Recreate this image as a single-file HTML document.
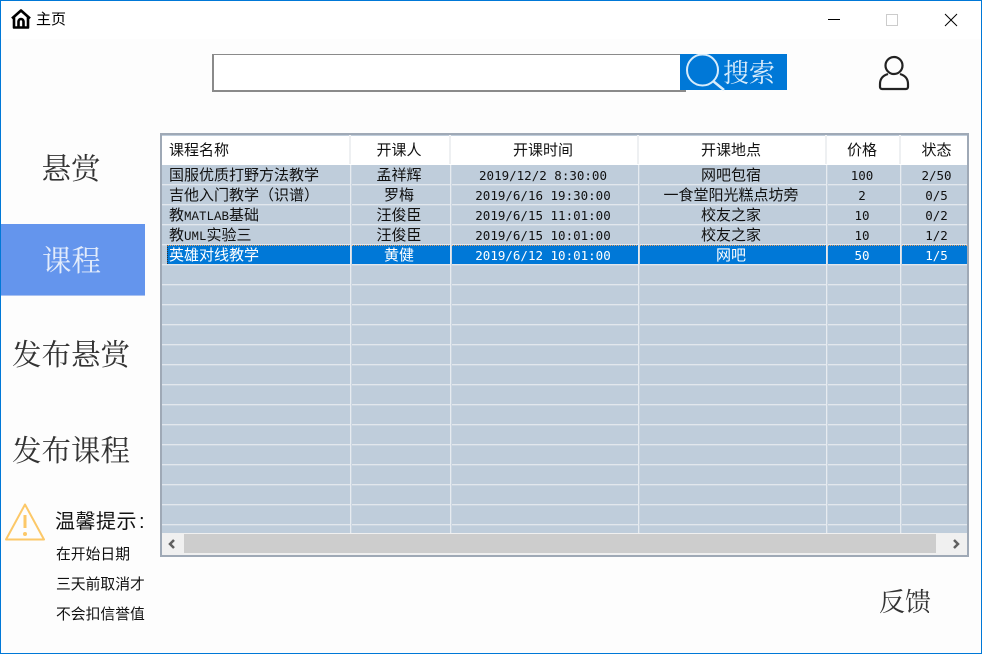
<!DOCTYPE html>
<html lang="zh"><head><meta charset="utf-8"><title>主页</title>
<style>
html,body{margin:0;padding:0}
body{width:982px;height:654px;overflow:hidden;background:#fff;position:relative;font-family:"Liberation Sans","Noto Sans CJK SC",sans-serif;color:#1a1a1a}
div,span{position:absolute;box-sizing:border-box}
.frame{left:0;top:0;width:982px;height:654px;border:1px solid #0078d7;pointer-events:none}
.bg{left:1px;top:39px;width:980px;height:614px;background:#fdfdfd}
.nav{font-family:"Liberation Serif","Noto Serif CJK SC",serif;font-size:29.5px;line-height:40px;white-space:nowrap;color:#333;text-align:center}
.tip{left:56px;font-size:14.8px;line-height:20px;white-space:nowrap;color:#111}
.table{left:160px;top:133px;width:809px;height:424px;border:2px solid #9fa9b6;background:#bfcddb;overflow:hidden}
.hl{left:0;width:805px;height:2px;background:linear-gradient(#e2e7ed 50%,#cbd6e1 50%)}
.vl{top:30px;width:2px;height:368px;background:linear-gradient(90deg,#e6ebf0 50%,#cbd6e1 50%)}
.head{left:0;top:1px;width:805px;height:29px;background:#fff}
.hv{top:0;width:2px;height:29px;background:#eef0f2}
.c{font-size:15px;line-height:20px;height:20px;white-space:nowrap;text-align:center;color:#111}
.n{font-family:"DejaVu Sans Mono","Liberation Mono",monospace;font-size:12.5px}
.m{position:static;font-family:"Liberation Mono",monospace;font-size:12.5px}
.l{text-align:left}
.sel{color:#fff}
</style></head><body>
<div class="bg"></div>

<svg style="position:absolute;left:11px;top:9px" width="20" height="20" viewBox="0 0 20 20"><path d="M1 9.500 10 1.500l9 8M3 8v10.500h14V8M7.500 18v-5.500a2.500 2.500 0 0 1 5 0V18" fill="none" stroke="#000" stroke-width="2.600" stroke-linejoin="round"/></svg>
<div style="left:36px;top:10px;font-size:15px;line-height:20px;color:#000;white-space:nowrap">主页</div>

<div style="left:828px;top:19px;width:12px;height:1px;background:#000"></div>
<div style="left:886px;top:14px;width:12px;height:12px;border:1px solid #ccc"></div>
<svg style="position:absolute;left:944px;top:13px" width="14" height="14" viewBox="0 0 14 14"><path d="M1 1 13 13M13 1 1 13" stroke="#000" stroke-width="1" fill="none"/></svg>

<div style="left:212px;top:54px;width:474px;height:38px;background:#fff;border:1px solid #8a8a8a;border-left-width:2px;border-bottom-width:2px"></div>
<div style="left:680px;top:54px;width:107px;height:36px;background:#0078d7"></div>
<svg style="position:absolute;left:680px;top:54px" width="50" height="38" viewBox="0 0 50 38"><circle cx="22.500" cy="16" r="15.500" fill="none" stroke="#d8ecfb" stroke-width="2"/><path d="M33 27 44 36" stroke="#d8ecfb" stroke-width="2.500"/></svg>
<div style="left:723px;top:56px;font-family:'Liberation Serif','Noto Serif CJK SC',serif;font-size:26px;line-height:36px;color:#d8ecfb;white-space:nowrap">搜索</div>

<svg style="position:absolute;left:877px;top:54px" width="34" height="38" viewBox="0 0 34 38"><circle cx="17" cy="11.500" r="8.500" fill="none" stroke="#222" stroke-width="2.200"/><path d="M11 20C6 21.500 3 25 3 30v3a2 2 0 0 0 2 2h24a2 2 0 0 0 2-2V30c0-5-3-8.500-8-10" fill="none" stroke="#222" stroke-width="2.200"/></svg>

<div class="nav" style="left:1px;top:150px;width:140px">悬赏</div>
<div style="left:1px;top:224px;width:144px;height:72px;background:#6495ed;border-bottom:1px solid #a9c1f0"></div>
<div class="nav" style="left:1px;top:242px;width:141px;color:#e3ecfb">课程</div>
<div class="nav" style="left:12px;top:336px">发布悬赏</div>
<div class="nav" style="left:12px;top:432px">发布课程</div>

<svg style="position:absolute;left:4px;top:502px" width="42" height="40" viewBox="0 0 42 40"><path d="M21 2.500 40 37.500H2Z" fill="none" stroke="#fcc868" stroke-width="2" stroke-linejoin="round"/><path d="M21 13v13" stroke="#fcc868" stroke-width="3"/><circle cx="21" cy="32" r="2" fill="#fcc868"/></svg>
<div class="tip" style="left:55px;top:510px;font-size:20px;line-height:24px;letter-spacing:.5px">温馨提示<span style="position:static;margin-left:2px">:</span></div>
<div class="tip" style="top:545px">在开始日期</div>
<div class="tip" style="top:575px">三天前取消才</div>
<div class="tip" style="top:605px">不会扣信誉值</div>

<div class="nav" style="left:879px;top:583px;font-size:26px">反馈</div>

<div class="table">
  <div class="head"></div>
  <div class="hv" style="left:187px"></div><div class="hv" style="left:287px"></div><div class="hv" style="left:475px"></div><div class="hv" style="left:663px"></div><div class="hv" style="left:737px"></div>

  <div class="hl" style="top:49px"></div><div class="hl" style="top:69px"></div><div class="hl" style="top:89px"></div>
  <div class="hl" style="top:109px"></div><div class="hl" style="top:129px"></div><div class="hl" style="top:149px"></div>
  <div class="hl" style="top:169px"></div><div class="hl" style="top:189px"></div><div class="hl" style="top:209px"></div>
  <div class="hl" style="top:229px"></div><div class="hl" style="top:249px"></div><div class="hl" style="top:269px"></div>
  <div class="hl" style="top:289px"></div><div class="hl" style="top:309px"></div><div class="hl" style="top:329px"></div>
  <div class="hl" style="top:349px"></div><div class="hl" style="top:369px"></div><div class="hl" style="top:389px"></div>

  <div style="left:5px;top:110px;width:800px;height:19px;background:#0078d7;border-top:1px dotted #e8a060;border-left:1px dotted #333"></div>

  <div class="vl" style="left:188px"></div><div class="vl" style="left:288px"></div><div class="vl" style="left:476px"></div><div class="vl" style="left:664px"></div><div class="vl" style="left:738px"></div>

  <div class="c l" style="left:7px;top:6px">课程名称</div>
  <div class="c" style="left:187px;width:100px;top:6px">开课人</div>
  <div class="c" style="left:287px;width:188px;top:6px">开课时间</div>
  <div class="c" style="left:475px;width:188px;top:6px">开课地点</div>
  <div class="c" style="left:663px;width:74px;top:6px">价格</div>
  <div class="c" style="left:737px;width:75px;top:6px">状态</div>

  <div class="c l" style="left:7px;top:31px">国服优质打野方法教学</div>
  <div class="c" style="left:187px;width:100px;top:31px">孟祥辉</div>
  <div class="c n" style="left:287px;width:188px;top:31px">2019/12/2 8:30:00</div>
  <div class="c" style="left:475px;width:188px;top:31px">网吧包宿</div>
  <div class="c n" style="left:663px;width:74px;top:31px">100</div>
  <div class="c n" style="left:737px;width:75px;top:31px">2/50</div>

  <div class="c l" style="left:7px;top:51px">吉他入门教学（识谱）</div>
  <div class="c" style="left:187px;width:100px;top:51px">罗梅</div>
  <div class="c n" style="left:287px;width:188px;top:51px">2019/6/16 19:30:00</div>
  <div class="c" style="left:475px;width:188px;top:51px">一食堂阳光糕点坊旁</div>
  <div class="c n" style="left:663px;width:74px;top:51px">2</div>
  <div class="c n" style="left:737px;width:75px;top:51px">0/5</div>

  <div class="c l" style="left:7px;top:71px">教<span class="m">MATLAB</span>基础</div>
  <div class="c" style="left:187px;width:100px;top:71px">汪俊臣</div>
  <div class="c n" style="left:287px;width:188px;top:71px">2019/6/15 11:01:00</div>
  <div class="c" style="left:475px;width:188px;top:71px">校友之家</div>
  <div class="c n" style="left:663px;width:74px;top:71px">10</div>
  <div class="c n" style="left:737px;width:75px;top:71px">0/2</div>

  <div class="c l" style="left:7px;top:91px">教<span class="m">UML</span>实验三</div>
  <div class="c" style="left:187px;width:100px;top:91px">汪俊臣</div>
  <div class="c n" style="left:287px;width:188px;top:91px">2019/6/15 10:01:00</div>
  <div class="c" style="left:475px;width:188px;top:91px">校友之家</div>
  <div class="c n" style="left:663px;width:74px;top:91px">10</div>
  <div class="c n" style="left:737px;width:75px;top:91px">1/2</div>

  <div class="c l sel" style="left:7px;top:111px">英雄对线教学</div>
  <div class="c sel" style="left:187px;width:100px;top:111px">黄健</div>
  <div class="c n sel" style="left:287px;width:188px;top:111px">2019/6/12 10:01:00</div>
  <div class="c sel" style="left:475px;width:188px;top:111px">网吧</div>
  <div class="c n sel" style="left:663px;width:74px;top:111px">50</div>
  <div class="c n sel" style="left:737px;width:75px;top:111px">1/5</div>

  <div style="left:0;top:398px;width:805px;height:22px;background:#f0f0f0"></div>
  <div style="left:22px;top:399px;width:752px;height:19px;background:#cdcdcd"></div>
  <svg style="position:absolute;left:4px;top:403px" width="12" height="12" viewBox="0 0 12 12"><path d="M8 2 4 6l4 4" fill="none" stroke="#606060" stroke-width="2.500"/></svg>
  <svg style="position:absolute;left:788px;top:403px" width="12" height="12" viewBox="0 0 12 12"><path d="M4 2l4 4-4 4" fill="none" stroke="#606060" stroke-width="2.500"/></svg>
</div>

<div class="frame"></div>
</body></html>
